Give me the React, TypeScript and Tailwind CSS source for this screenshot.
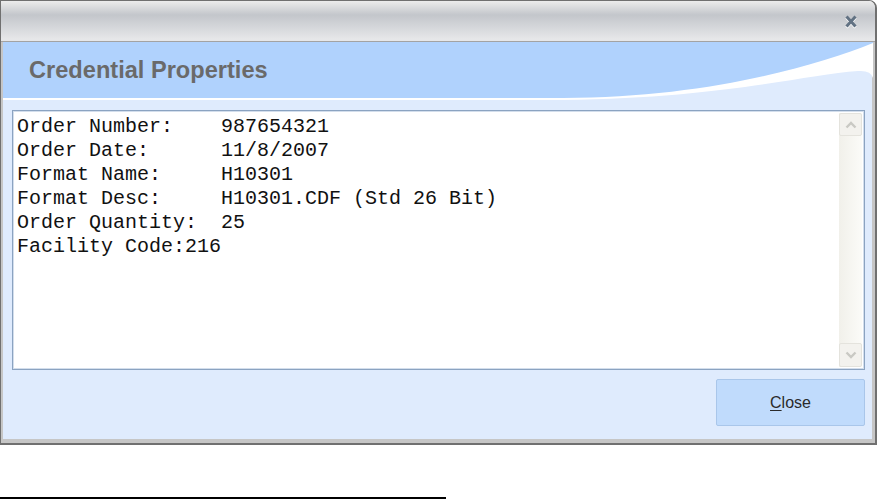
import React from 'react'

const lines = [
  'Order Number:    987654321',
  'Order Date:      11/8/2007',
  'Format Name:     H10301',
  'Format Desc:     H10301.CDF (Std 26 Bit)',
  'Order Quantity:  25',
  'Facility Code:216',
]

function Chevron({ up }: { up?: boolean }) {
  return (
    <svg width="12" height="8" viewBox="0 0 12 8">
      <path
        d={up ? 'M1.5 6.5 L6 2 L10.5 6.5' : 'M1.5 1.5 L6 6 L10.5 1.5'}
        fill="none"
        stroke="#c9c9c4"
        strokeWidth="2.4"
      />
    </svg>
  )
}

export default function App() {
  return (
    <div className="w-[878px] h-[499px] bg-white flex flex-col">
      {/* Dialog frame */}
      <div className="w-[877px] h-[445px] flex flex-col border-t border-l border-r-2 border-b-2 border-[#707070] rounded-tr-[8px] overflow-hidden">
        {/* Title bar */}
        <div className="h-[41px] shrink-0 flex items-center justify-end pr-[18px] border-b border-[#a3a3a3] bg-[linear-gradient(to_bottom,#ececec_0%,#c3c6cb_35%,#e6e7e9_95%)]">
          <svg width="12" height="13" viewBox="0 0 12 13" className="drop-shadow-[0_1px_0_#ffffff]">
            <path d="M1.5 1.5 L10.5 11.5 M10.5 1.5 L1.5 11.5" stroke="#627283" strokeWidth="3" />
          </svg>
        </div>

        {/* Body */}
        <div className="flex-1 flex flex-col bg-[#dfebfd] border-l-2 border-r-[3px] border-b-4 border-[#c6c6c6]">
          {/* Header */}
          <div className="relative h-[68px] shrink-0">
            <svg className="absolute inset-0" width="870" height="68" viewBox="0 0 870 68" preserveAspectRatio="none">
              <path d="M0 0 H870 V36 Q868 28 855 29 C800 33 720 56 560 58 H0 Z" fill="#ffffff" />
              <path d="M0 0 H870 V1 C810 25 700 56 560 56 H0 Z" fill="#b0d2fd" />
            </svg>
            <div className="relative pt-[17px] pl-[26px] text-[23.6px] leading-none font-bold text-[#6a6a6a] font-['Liberation_Sans',Arial,sans-serif]">
              Credential Properties
            </div>
          </div>

          {/* Text box */}
          <div className="ml-[9px] mr-[7px] h-[260px] shrink-0 border border-[#8ba3c1] bg-white">
            <div className="h-full flex border border-[#d3deec]">
              <div className="flex-1 pl-[3px] pt-[3px] whitespace-pre text-[20px] leading-[24px] text-[#111] font-['Liberation_Mono','Courier_New',monospace]">
                {lines.map((l) => (
                  <div key={l}>{l}</div>
                ))}
              </div>
              <div className="w-[23px] my-[1px] mr-[1px] flex flex-col justify-between bg-[linear-gradient(to_right,#f1f0ea,#fbfbf8)]">
                <div className="h-[23px] flex items-center justify-center rounded-[2px] border border-[#e4e3dd] bg-[#f3f2ee]">
                  <Chevron up />
                </div>
                <div className="h-[24px] flex items-center justify-center rounded-[2px] border border-[#e4e3dd] bg-[#f3f2ee]">
                  <Chevron />
                </div>
              </div>
            </div>
          </div>

          {/* Footer */}
          <div className="flex justify-end mr-[7px] mt-[9px]">
            <button className="w-[149px] h-[47px] rounded-[2px] border border-[#a9c6ea] bg-[#c0dbfc] text-[16px] text-[#2a2a2a] font-['Liberation_Sans',Arial,sans-serif]">
              <span className="underline underline-offset-2">C</span>lose
            </button>
          </div>
        </div>
      </div>

      <div className="mt-[52px] w-[446px] h-[2px] bg-black" />
    </div>
  )
}
